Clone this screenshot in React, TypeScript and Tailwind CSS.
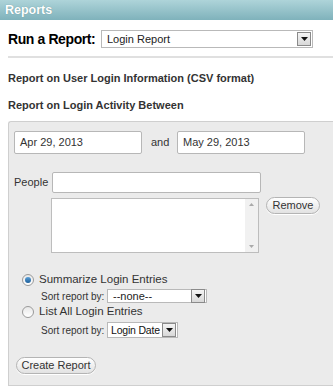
import { ReactNode } from 'react';

const font = { fontFamily: '"Liberation Sans", Arial, sans-serif' };

const Arrow = () => (
  <div className="flex shrink-0 items-center justify-center w-[14px] h-[14px] border border-[#8a8a8a] bg-gradient-to-b from-[#f4f4f4] to-[#d8d8d8]">
    <svg width="7" height="4" viewBox="0 0 7 4">
      <path d="M0 0h7L3.5 4z" fill="#111" />
    </svg>
  </div>
);

const Select = ({ w, h, text, big }: { w: string; h: string; text: string; big?: boolean }) => (
  <div className={`flex shrink-0 items-center justify-between bg-white border border-[#b9b9b9] pr-[1px] ${big ? 'pl-[3px]' : 'pl-[5px]'} ${w} ${h}`}>
    <span className={`${big ? 'text-[10.5px] tracking-[-0.2px] text-[#111]' : 'text-[11px] text-[#222]'} leading-none whitespace-nowrap`}>{text}</span>
    <Arrow />
  </div>
);

const Pill = ({ children, w }: { children: ReactNode; w: string }) => (
  <div className={`flex items-center justify-center h-[17px] ${w} rounded-full border border-[#b4b4b4] bg-gradient-to-b from-white to-[#e2e2e2] text-[11px] text-[#333] whitespace-nowrap shadow-[0_1px_0_#fff]`}>
    {children}
  </div>
);

const Radio = ({ on }: { on?: boolean }) => (
  <div className="flex shrink-0 items-center justify-center w-[12px] h-[12px] rounded-full border border-[#9a9a9a] bg-gradient-to-b from-[#e8e8e8] to-white">
    {on && <div className="w-[6px] h-[6px] rounded-full bg-gradient-to-b from-[#5aa0d8] to-[#1d5f9a]" />}
  </div>
);

export default function App() {
  return (
    <div className="w-[333px] h-[386px] bg-white overflow-hidden" style={font}>
      {/* title bar */}
      <div className="h-[20px] flex items-center pl-[5px] bg-gradient-to-b from-[#aed4d9] to-[#7fb2bb]">
        <span className="text-[12.5px] font-bold text-white [text-shadow:0_0_1px_#5f8f97]">Reports</span>
      </div>

      <div className="pl-[8px]">
        <div className="flex items-center h-[18px] mt-[10px]">
          <span className="text-[14px] tracking-[-0.4px] font-bold text-black w-[93px] shrink-0 whitespace-nowrap">Run a Report:</span>
          <Select w="w-[212px]" h="h-[18px]" text="Login Report" />
        </div>

        <div className="mt-[8px] border-t-2 border-[#e0e0e0]" />

        <div className="mt-[13px] text-[11px] font-bold text-[#333] leading-[14px] whitespace-nowrap">
          Report on User Login Information (CSV format)
        </div>
        <div className="mt-[13px] text-[11px] font-bold text-[#333] leading-[14px] whitespace-nowrap">
          Report on Login Activity Between
        </div>

        {/* panel */}
        <div className="mt-[9px] h-[265px] border border-[#cfcfcf] border-r-0 rounded-tl-[3px] bg-[#ebebeb] pl-[5px] pt-[9px]">
          <div className="flex items-center">
            <div className="w-[128px] h-[23px] shrink-0 flex items-center pl-[5px] bg-white border border-[#b7b7b7] rounded-[2px] text-[11px] text-[#333]">
              Apr 29, 2013
            </div>
            <span className="ml-[9px] w-[26px] shrink-0 text-[11px] text-[#333]">and</span>
            <div className="w-[128px] h-[23px] shrink-0 flex items-center pl-[5px] bg-white border border-[#b7b7b7] rounded-[2px] text-[11px] text-[#333]">
              May 29, 2013
            </div>
          </div>

          <div className="flex items-center mt-[18px]">
            <span className="w-[38px] shrink-0 text-[11px] text-[#333]">People</span>
            <div className="w-[209px] h-[21px] shrink-0 bg-white border border-[#b7b7b7] rounded-[2px]" />
          </div>

          <div className="flex items-start mt-[5px] pl-[37px]">
            <div className="flex shrink-0 w-[208px] h-[55px] bg-white border border-[#bdbdbd]">
              <div className="flex-1" />
              <div className="w-[13px] flex flex-col justify-between items-center py-[4px] bg-[#f1f1f1]">
                <svg width="5" height="3" viewBox="0 0 5 3"><path d="M2.5 0L5 3H0z" fill="#aaa" /></svg>
                <svg width="5" height="3" viewBox="0 0 5 3"><path d="M0 0h5L2.5 3z" fill="#aaa" /></svg>
              </div>
            </div>
            <div className="ml-[7px] -mt-[1px]">
              <Pill w="w-[54px]">Remove</Pill>
            </div>
          </div>

          <div className="flex items-center gap-[5px] mt-[20px] pl-[8px] h-[14px]">
            <Radio on />
            <span className="text-[11.5px] text-[#333] whitespace-nowrap">Summarize Login Entries</span>
          </div>
          <div className="flex items-center mt-[2px] pl-[27px] h-[14px]">
            <span className="w-[66px] shrink-0 text-[10px] text-[#333] whitespace-nowrap">Sort report by:</span>
            <Select w="w-[100px]" h="h-[14px]" text="--none--" />
          </div>
          <div className="flex items-center gap-[5px] mt-[2px] pl-[8px] h-[14px]">
            <Radio />
            <span className="text-[11.5px] text-[#333] whitespace-nowrap">List All Login Entries</span>
          </div>
          <div className="flex items-center mt-[3px] pl-[27px] h-[16px]">
            <span className="w-[66px] shrink-0 text-[10px] text-[#333] whitespace-nowrap">Sort report by:</span>
            <Select w="w-[71px]" h="h-[16px]" text="Login Date" big />
          </div>

          <div className="mt-[19px] pl-[2px]">
            <Pill w="w-[80px]">Create Report</Pill>
          </div>
        </div>
      </div>
    </div>
  );
}
